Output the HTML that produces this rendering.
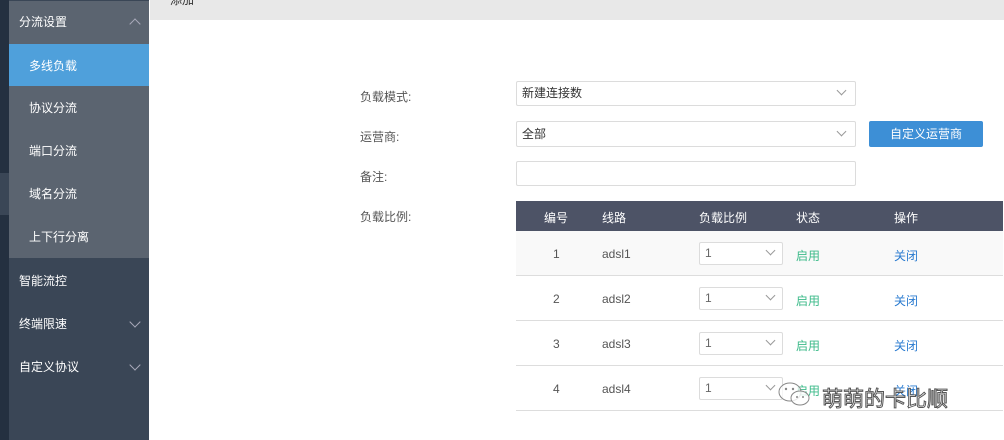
<!DOCTYPE html>
<html><head><meta charset="utf-8"><style>
*{margin:0;padding:0;box-sizing:border-box}
body{width:1004px;height:440px;overflow:hidden;background:#fff;font-family:"Liberation Sans","Noto Sans CJK SC",sans-serif;font-size:12px;position:relative}
.a{position:absolute}
.strip{left:0;top:0;width:9px;height:440px;background:#243040}
.side{left:9px;top:0;width:140px;height:440px;background:#3a4656}
.mi{position:absolute;left:0;width:140px;color:#fff;font-size:12px;line-height:43px}
.chev{position:absolute;right:10px;top:16px;width:8px;height:8px;border-left:1px solid #aab;border-bottom:1px solid #aab}
.in{position:absolute;border:1px solid #dcdcdc;border-radius:2px;background:#fff;color:#333;padding-left:5px;font-size:12px}
.dd{position:absolute;width:7px;height:7px;border-right:1px solid #999;border-bottom:1px solid #999;transform:rotate(45deg)}
.lbl{position:absolute;left:360px;color:#555;font-size:12px}
.th{position:absolute;color:#fff;font-size:12px;top:209px}
.row{position:absolute;left:516px;width:487px;height:45px;border-bottom:1px solid #ddd}
.c{position:absolute;top:16px;font-size:12px;color:#555}
</style></head><body>
<div class="a strip"></div>
<div class="a" style="left:0;top:173px;width:9px;height:42px;background:#3a4656"></div>
<div class="a side">
 <div class="a" style="left:0;top:0;width:140px;height:258px;background:#5b6470"></div>
 <div class="a" style="left:0;top:0;width:140px;height:1px;background:#3a4656"></div>
 <div class="mi" style="top:1px;padding-left:10px">分流设置<span class="chev" style="transform:rotate(135deg);top:19px"></span></div>
 <div class="mi" style="top:44px;height:42px;line-height:44px;background:#4fa0db;padding-left:20px">多线负载</div>
 <div class="mi" style="top:87px;padding-left:20px">协议分流</div>
 <div class="mi" style="top:130px;padding-left:20px">端口分流</div>
 <div class="mi" style="top:173px;padding-left:20px">域名分流</div>
 <div class="mi" style="top:216px;padding-left:20px">上下行分离</div>
 <div class="mi" style="top:260px;padding-left:10px">智能流控</div>
 <div class="mi" style="top:303px;padding-left:10px">终端限速<span class="chev" style="transform:rotate(-45deg);top:15px"></span></div>
 <div class="mi" style="top:346px;padding-left:10px">自定义协议<span class="chev" style="transform:rotate(-45deg);top:15px"></span></div>
</div>
<div class="a" style="left:150px;top:0;width:854px;height:20px;background:#e8e8e8;overflow:hidden"><span style="position:absolute;left:20px;top:-9px;color:#333">添加</span></div>

<div class="lbl" style="top:88px">负载模式:</div>
<div class="lbl" style="top:128px">运营商:</div>
<div class="lbl" style="top:168px">备注:</div>
<div class="lbl" style="top:208px">负载比例:</div>
<div class="in" style="left:516px;top:81px;width:340px;height:25px;line-height:23px">新建连接数<span class="dd" style="right:10px;top:5px"></span></div>
<div class="in" style="left:516px;top:121px;width:340px;height:26px;line-height:24px">全部<span class="dd" style="right:10px;top:6px"></span></div>
<div class="a" style="left:869px;top:121px;width:114px;height:26px;background:#3d8fd6;border-radius:2px;color:#fff;text-align:center;line-height:26px">自定义运营商</div>
<div class="in" style="left:516px;top:161px;width:340px;height:25px"></div>

<div class="a" style="left:516px;top:201px;width:487px;height:30px;background:#4d5366"></div>
<div class="th" style="left:544px">编号</div>
<div class="th" style="left:602px">线路</div>
<div class="th" style="left:699px">负载比例</div>
<div class="th" style="left:796px">状态</div>
<div class="th" style="left:894px">操作</div>

<div class="row" style="top:231px;background:#f9f9f9"><span class="c" style="left:37px">1</span><span class="c" style="left:86px">adsl1</span><div class="in" style="left:183px;top:11px;width:84px;height:23px;line-height:21px;color:#666">1<span class="dd" style="right:8px;top:4px"></span></div><span class="c" style="left:280px;color:#3dbb8a">启用</span><span class="c" style="left:378px;color:#2a7bd0">关闭</span></div>
<div class="row" style="top:276px"><span class="c" style="left:37px">2</span><span class="c" style="left:86px">adsl2</span><div class="in" style="left:183px;top:11px;width:84px;height:23px;line-height:21px;color:#666">1<span class="dd" style="right:8px;top:4px"></span></div><span class="c" style="left:280px;color:#3dbb8a">启用</span><span class="c" style="left:378px;color:#2a7bd0">关闭</span></div>
<div class="row" style="top:321px"><span class="c" style="left:37px">3</span><span class="c" style="left:86px">adsl3</span><div class="in" style="left:183px;top:11px;width:84px;height:23px;line-height:21px;color:#666">1<span class="dd" style="right:8px;top:4px"></span></div><span class="c" style="left:280px;color:#3dbb8a">启用</span><span class="c" style="left:378px;color:#2a7bd0">关闭</span></div>
<div class="row" style="top:366px"><span class="c" style="left:37px">4</span><span class="c" style="left:86px">adsl4</span><div class="in" style="left:183px;top:11px;width:84px;height:23px;line-height:21px;color:#666">1<span class="dd" style="right:8px;top:4px"></span></div><span class="c" style="left:280px;color:#3dbb8a">启用</span><span class="c" style="left:378px;color:#2a7bd0">关闭</span></div>

<svg class="a" style="left:776px;top:380px" width="40" height="30" viewBox="0 0 40 30"><ellipse cx="14" cy="12" rx="11" ry="9" fill="rgba(255,255,255,.7)" stroke="#888"/><ellipse cx="24" cy="18" rx="9" ry="7" fill="rgba(255,255,255,.8)" stroke="#888"/><circle cx="10" cy="9" r="1.2" fill="#888"/><circle cx="17" cy="9" r="1.2" fill="#888"/><circle cx="21" cy="17" r="1" fill="#888"/><circle cx="27" cy="17" r="1" fill="#888"/></svg>
<div class="a" style="left:822px;top:383px;font-size:21px;color:#fff;-webkit-text-stroke:1px #555">萌萌的卡比顺</div>
</body></html>
